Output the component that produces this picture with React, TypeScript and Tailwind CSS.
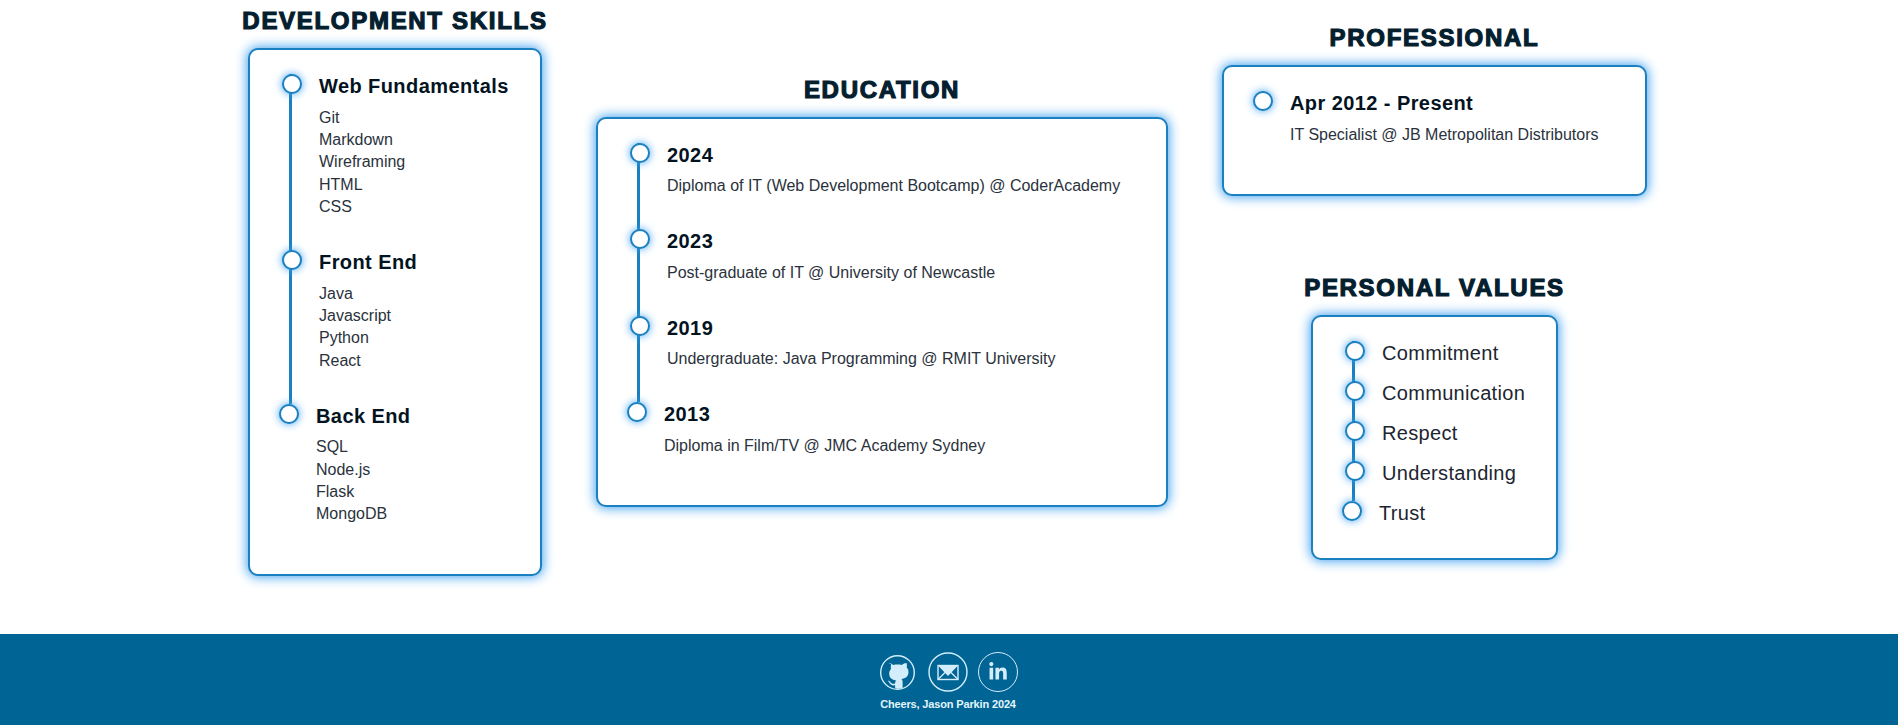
import { FaLinkedinIn } from "react-icons/fa";

const skills = [
  { title: "Web Fundamentals", items: ["Git", "Markdown", "Wireframing", "HTML", "CSS"] },
  { title: "Front End", items: ["Java", "Javascript", "Python", "React"] },
  { title: "Back End", items: ["SQL", "Node.js", "Flask", "MongoDB"] },
];

const education = [
  { title: "2024", items: ["Diploma of IT (Web Development Bootcamp) @ CoderAcademy"] },
  { title: "2023", items: ["Post-graduate of IT @ University of Newcastle"] },
  { title: "2019", items: ["Undergraduate: Java Programming @ RMIT University"] },
  { title: "2013", items: ["Diploma in Film/TV @ JMC Academy Sydney"] },
];

const values = ["Commitment", "Communication", "Respect", "Understanding", "Trust"];

const Title = ({ children }: { children: string }) => (
  <h2 className="-mx-[30px] mb-[14px] h-[28px] whitespace-nowrap text-center text-[24px] leading-[30px] font-bold tracking-[1.7px] text-[#04202f] [-webkit-text-stroke:1.2px_#04202f]">
    {children}
  </h2>
);

const Card = ({ className, children }: { className: string; children: React.ReactNode }) => (
  <ul className={`rounded-[10px] border-2 border-[#1a80c0] bg-white pt-[24px] pb-[17px] pl-[39px] shadow-[0_0_12px_1px_#3fa0f0] ${className}`}>
    {children}
  </ul>
);

const Dot = () => (
  <span className="absolute top-0 -left-[10px] h-[20px] w-[20px] rounded-full border-[2.5px] border-[#1a80c0] bg-white shadow-[0_0_8px_#3fa0f0]" />
);

const Entry = ({ title, items, last }: { title: string; items: string[]; last: boolean }) => (
  <li className={`relative pb-[31.4px] pl-[27px] ${last ? "" : "border-l-[3px] border-[#1a80c0]"}`}>
    <Dot />
    <h3 className="mb-[7.2px] text-[20px] leading-[25.4px] font-bold tracking-[0.42px] text-[#04141f]">{title}</h3>
    {items.map((item) => (
      <p key={item} className="text-[16px] leading-[22.4px] text-[#2a323c]">
        {item}
      </p>
    ))}
  </li>
);

const GithubIcon = () => (
  <svg viewBox="0 0 35 35" className="mr-[3px] h-[35px] w-[35px]">
    <circle cx="17.5" cy="17.5" r="16.8" fill="none" stroke="#d3eefa" strokeWidth="1.4" />
    <path
      d="M8.500 8c1.700 0 3.400.9 4.800 2 2.700-.6 5.700-.6 8.400 0 1.400-1.100 3.100-2 4.800-2 .5 1.600.5 3.200.2 4.600 1.200 1.300 1.800 2.800 1.800 4.500 0 4.600-2.900 6.500-7.100 7 .8.600 1.200 1.700 1.200 3v6c-2.500.7-5.200.7-7.500 0v-2.800c-2.600.5-4.500-.2-5.500-2.300-.5-1-1.200-1.700-2-2.200 1.300-.2 2.400.4 3.200 1.600.8 1.200 2.300 1.500 4.300 1 0-1.300.4-2.400 1.200-3-4.200-.5-7.100-2.400-7.100-7 0-1.700.6-3.200 1.800-4.500-.3-1.400-.3-3 .2-4.600z"
      fill="#d3eefa"
    />
  </svg>
);

const MailIcon = () => (
  <svg viewBox="0 0 40 40" className="h-[40px] w-[40px]">
    <circle cx="20" cy="20" r="19" fill="none" stroke="#d3eefa" strokeWidth="1.4" />
    <rect x="10" y="13.500" width="20" height="14" fill="none" stroke="#d3eefa" strokeWidth="1.4" />
    <path d="M10 13.500h20l-10 10.500z" fill="#d3eefa" />
    <path d="M10 27.500l7-7M30 27.500l-7-7" stroke="#d3eefa" strokeWidth="1.200" />
  </svg>
);

const LinkedinIcon = () => (
  <span className="flex h-[40px] w-[40px] items-center justify-center rounded-full border-[1.4px] border-[#d3eefa] text-[#d3eefa]">
    <FaLinkedinIn className="h-[20px] w-[20px]" />
  </span>
);

export default function App() {
  return (
    <div className="bg-white font-['Liberation_Sans',Arial,sans-serif]">
      <main className="ml-[248px] flex items-center gap-[54px] pt-[6px] pb-[57.8px]">
        <section className="w-[294px]">
          <Title>DEVELOPMENT SKILLS</Title>
          <Card className="w-[294px]">
            {skills.map((s, i) => (
              <Entry key={s.title} title={s.title} items={s.items} last={i === skills.length - 1} />
            ))}
          </Card>
        </section>

        <section className="w-[572px]">
          <Title>EDUCATION</Title>
          <Card className="w-[572px]">
            {education.map((s, i) => (
              <Entry key={s.title} title={s.title} items={s.items} last={i === education.length - 1} />
            ))}
          </Card>
        </section>

        <section className="mt-[1px] flex w-[425px] flex-col items-center">
          <Title>PROFESSIONAL</Title>
          <Card className="w-[425px]">
            <Entry title="Apr 2012 - Present" items={["IT Specialist @ JB Metropolitan Distributors"]} last />
          </Card>
          <div className="h-[77px]" />
          <Title>PERSONAL VALUES</Title>
          <Card className="w-[247px]">
            {values.map((v, i) => (
              <li
                key={v}
                className={`relative pb-[16px] pl-[27px] text-[20px] leading-[24px] tracking-[0.32px] text-[#1c2530] ${
                  i === values.length - 1 ? "" : "border-l-[3px] border-[#1a80c0]"
                }`}
              >
                <Dot />
                {v}
              </li>
            ))}
          </Card>
        </section>
      </main>

      <footer className="flex h-[91px] flex-col items-center bg-[#006494] pt-[18px]">
        <div className="flex items-center gap-x-[10px]">
          <GithubIcon />
          <MailIcon />
          <LinkedinIcon />
        </div>
        <p className="mt-[6px] -ml-[2px] text-[11px] leading-[13px] font-bold tracking-[-0.15px] text-[#e3f5fc]">Cheers, Jason Parkin 2024</p>
      </footer>
    </div>
  );
}
